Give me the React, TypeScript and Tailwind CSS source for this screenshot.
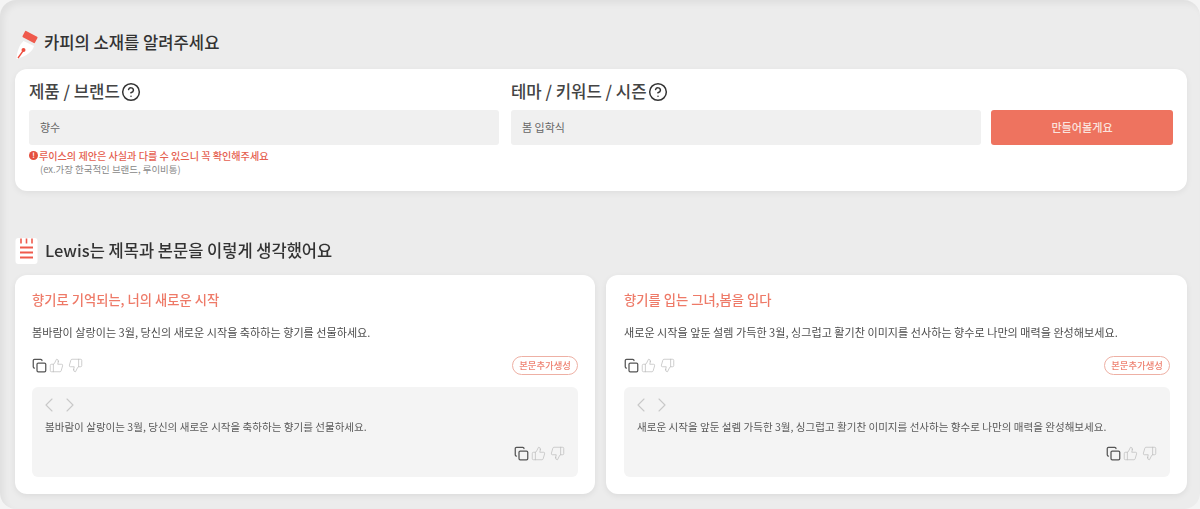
import { Copy, ThumbsUp, ThumbsDown, ChevronLeft, ChevronRight, CircleHelp } from "lucide-react";

function PenIcon() {
  return (
    <svg width="26" height="32" viewBox="0 0 26 32" className="shrink-0">
      <path d="M8.5 14 L19 19 C18 24 12 29 1.5 32 C2 25 4 18 8.5 14Z" fill="#fff" />
      <path d="M3 31 L8 24" stroke="#ee4d3f" strokeWidth="1.3" />
      <circle cx="8.5" cy="23" r="2" fill="#ee4d3f" />
      <rect x="8" y="6.5" width="14" height="7" rx="0.8" transform="rotate(28 15 10)" fill="#ef5a4c" />
    </svg>
  );
}

function NoteIcon() {
  return (
    <svg width="23" height="27" viewBox="0 0 23 27" className="shrink-0">
      <rect x="0.5" y="1" width="22" height="26" rx="3" fill="#fff" />
      <path d="M6 1.5v5M11.5 1.5v5M17 1.5v5" stroke="#ef5a4c" strokeWidth="1.6" />
      <path d="M5 10.5h13M5 15.5h13M5 20.5h13" stroke="#ef5a4c" strokeWidth="1.8" />
    </svg>
  );
}

function Actions() {
  return (
    <div className="flex items-center gap-[2px]">
      <Copy size={15} strokeWidth={2} className="text-[#555]" />
      <ThumbsUp size={15} strokeWidth={1.2} className="text-[#bdbdbd]" />
      <ThumbsDown size={15} strokeWidth={1.2} className="ml-[2px] text-[#bdbdbd]" />
    </div>
  );
}

function ResultCard({ title, body, className }: { title: string; body: string; className: string }) {
  return (
    <div className={`flex h-[219px] flex-col rounded-[12px] bg-white pt-[15px] pr-[17px] shadow-[0_2px_6px_rgba(0,0,0,0.07)] ${className}`}>
      <h3 className="text-[13.3px] leading-[20px] font-medium text-[#ee7a68]">{title}</h3>
      <p className="mt-[14px] text-[11.1px] leading-[16px] whitespace-nowrap text-[#4d4d4d]">{body}</p>
      <div className="mt-[15px] flex h-[20px] items-center justify-between">
        <Actions />
        <span className="rounded-full border-[1.5px] border-[#eeb0a4] px-[6px] text-[9.4px] leading-[17px] font-medium whitespace-nowrap text-[#ee8272]">
          본문추가생성
        </span>
      </div>
      <div className="mt-[12px] flex h-[90px] flex-col rounded-[6px] bg-[#f4f4f4] px-[13px] pt-[6px]">
        <div className="-ml-[8px] flex text-[#c8c8c8]">
          <ChevronLeft size={24} strokeWidth={1.1} />
          <ChevronRight size={24} strokeWidth={1.1} className="-ml-[3px]" />
        </div>
        <p className="mt-[2px] text-[10.55px] leading-[16px] whitespace-nowrap text-[#5a5a5a]">{body}</p>
        <div className="mt-[11px] flex justify-end">
          <Actions />
        </div>
      </div>
    </div>
  );
}

export default function App() {
  return (
    <div className="h-[509px] w-[1200px] overflow-hidden bg-[#f4f4f4] font-['Noto_Sans_CJK_KR','Noto_Sans',sans-serif]">
      <div className="h-[509px] rounded-[16px] bg-[#ececec] pt-[27px] pr-[13px] pl-[15px] shadow-[inset_4px_4px_6px_rgba(0,0,0,0.05)] blur-[0.4px]">
        <div className="flex h-[32px] items-center gap-[3px]">
          <PenIcon />
          <h2 className="pb-[2px] text-[16.6px] font-medium text-[#333]">카피의 소재를 알려주세요</h2>
        </div>

        <section className="mt-[10px] h-[122px] rounded-[12px] bg-white px-[14px] pt-[12px] shadow-[0_2px_6px_rgba(0,0,0,0.06)]">
          <div className="flex">
            <div className="w-[470px]">
              <label className="flex h-[21px] items-center gap-[1px] text-[16.7px] font-medium text-[#444]">
                제품 / 브랜드 <CircleHelp size={20} strokeWidth={1.8} className="text-[#333]" />
              </label>
              <div className="mt-[8px] flex h-[35px] items-center rounded-[3px] bg-[#f0f0f0] px-[11px] text-[11px] text-[#666]">
                향수
              </div>
              <p className="mt-[3px] flex h-[15px] items-center gap-[1px] text-[10.1px] font-medium text-[#e5604f]">
                <span className="flex h-[9px] w-[9px] items-center justify-center rounded-full bg-[#e5503f] text-[7px] leading-none font-bold text-white">
                  !
                </span>
                루이스의 제안은 사실과 다를 수 있으니 꼭 확인해주세요
              </p>
              <p className="pl-[11px] text-[9.45px] leading-[13px] text-[#888]">(ex.가장 한국적인 브랜드, 루이비통)</p>
            </div>
            <div className="ml-[12px] w-[470px]">
              <label className="flex h-[21px] items-center gap-[1px] text-[16.7px] font-medium text-[#444]">
                테마 / 키워드 / 시즌 <CircleHelp size={20} strokeWidth={1.8} className="text-[#333]" />
              </label>
              <div className="mt-[8px] flex h-[35px] items-center rounded-[3px] bg-[#f0f0f0] px-[11px] text-[11px] text-[#666]">
                봄 입학식
              </div>
            </div>
            <button className="mt-[29px] ml-[10px] h-[35px] w-[182px] rounded-[3px] bg-[#ee735f] text-[11.1px] font-medium text-[#fbe3de]">
              만들어볼게요
            </button>
          </div>
        </section>

        <div className="mt-[43px] flex h-[32px] items-center gap-[7px]">
          <NoteIcon />
          <h2 className="text-[16.5px] font-medium text-[#333]">Lewis는 제목과 본문을 이렇게 생각했어요</h2>
        </div>

        <div className="mt-[9px] flex gap-[11px]">
          <ResultCard
            className="w-[580px] pl-[17px]"
            title="향기로 기억되는, 너의 새로운 시작"
            body="봄바람이 살랑이는 3월, 당신의 새로운 시작을 축하하는 향기를 선물하세요."
          />
          <ResultCard
            className="w-[581px] pl-[18px]"
            title="향기를 입는 그녀,봄을 입다"
            body="새로운 시작을 앞둔 설렘 가득한 3월, 싱그럽고 활기찬 이미지를 선사하는 향수로 나만의 매력을 완성해보세요."
          />
        </div>
      </div>
    </div>
  );
}
